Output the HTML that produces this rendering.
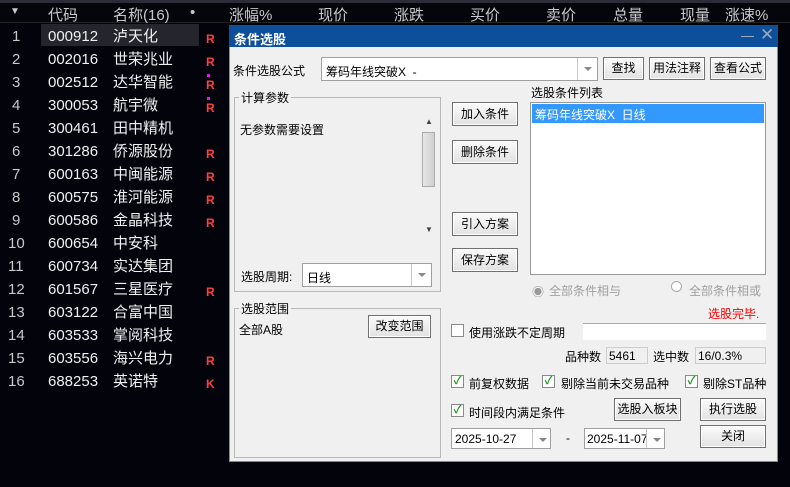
<!DOCTYPE html><html><head><meta charset="utf-8"><style>
*{margin:0;padding:0;box-sizing:border-box}
body{width:790px;height:487px;background:#03030c;font-family:"Liberation Sans","Noto Sans CJK SC",sans-serif;position:relative;overflow:hidden}
.a{position:absolute;white-space:nowrap}
.hd{color:#c8c8c8;font-size:15px;top:4px}
.n{color:#c8c8c8;font-size:15px;margin-top:3px;line-height:18px}
.c{color:#f0f0f0;font-size:15px;margin-top:3px;line-height:18px}
.R{color:#ff4040;font-size:12px;font-weight:bold;margin-top:1px}
.dl{font-size:12px;color:#000;margin-top:1px}
.btn{position:absolute;background:linear-gradient(#fafafa,#e2e2e2);border:1px solid #707070;font-size:12px;text-align:center;color:#000;box-shadow:inset 0 0 0 1px #fff}
.box{position:absolute;background:#fff;border:1px solid #a0a0a0}
.grp{position:absolute;border:1px solid #b8b8b8}
.gl{position:absolute;background:#f0f0f0;font-size:12px;padding:0 2px;top:-9px;left:4px}
.cb{position:absolute;width:13px;height:13px;border:1px solid #8a8a8a;background:#fff;font-size:11px;color:#1a9a1a;line-height:11px;text-align:center;font-weight:bold}
.arr{position:absolute;right:0;top:0;bottom:0;width:20px;border-left:1px solid #c8c8c8}
.arr:after{content:"";position:absolute;left:6px;top:9px;border:4px solid transparent;border-top:4px solid #888}
</style></head><body>
<div class="a" style="left:0;top:0;width:790px;height:3px;background:#2c2c38"></div>
<div class="a" style="left:0;top:3px;width:790px;height:20px;background:#05050c;border-bottom:1px solid #222"></div>
<div class="a hd" style="left:10px;top:6px;font-size:10px">▼</div>
<div class="a hd" style="left:48px">代码</div>
<div class="a hd" style="left:113px">名称(16)</div>
<div class="a hd" style="left:190px">•</div>
<div class="a hd" style="left:229px">涨幅%</div>
<div class="a hd" style="left:318px">现价</div>
<div class="a hd" style="left:394px">涨跌</div>
<div class="a hd" style="left:470px">买价</div>
<div class="a hd" style="left:546px">卖价</div>
<div class="a hd" style="left:613px">总量</div>
<div class="a hd" style="left:680px">现量</div>
<div class="a hd" style="left:725px">涨速%</div>
<div class="a" style="left:41px;top:24px;width:158px;height:22px;background:#25252d"></div>
<div class="a n" style="left:12px;top:25px">1</div><div class="a c" style="left:48px;top:25px">000912</div><div class="a c" style="left:113px;top:25px">泸天化</div><div class="a R" style="left:206px;top:31px">R</div>
<div class="a n" style="left:12px;top:48px">2</div><div class="a c" style="left:48px;top:48px">002016</div><div class="a c" style="left:113px;top:48px">世荣兆业</div><div class="a R" style="left:206px;top:54px">R</div>
<div class="a n" style="left:12px;top:71px">3</div><div class="a c" style="left:48px;top:71px">002512</div><div class="a c" style="left:113px;top:71px">达华智能</div><div class="a R" style="left:206px;top:77px">R</div><div class="a" style="left:207px;top:74px;width:3px;height:3px;background:#f0f"></div>
<div class="a n" style="left:12px;top:94px">4</div><div class="a c" style="left:48px;top:94px">300053</div><div class="a c" style="left:113px;top:94px">航宇微</div><div class="a R" style="left:206px;top:100px">R</div><div class="a" style="left:207px;top:97px;width:3px;height:3px;background:#f0f"></div>
<div class="a n" style="left:12px;top:117px">5</div><div class="a c" style="left:48px;top:117px">300461</div><div class="a c" style="left:113px;top:117px">田中精机</div>
<div class="a n" style="left:12px;top:140px">6</div><div class="a c" style="left:48px;top:140px">301286</div><div class="a c" style="left:113px;top:140px">侨源股份</div><div class="a R" style="left:206px;top:146px">R</div>
<div class="a n" style="left:12px;top:163px">7</div><div class="a c" style="left:48px;top:163px">600163</div><div class="a c" style="left:113px;top:163px">中闽能源</div><div class="a R" style="left:206px;top:169px">R</div>
<div class="a n" style="left:12px;top:186px">8</div><div class="a c" style="left:48px;top:186px">600575</div><div class="a c" style="left:113px;top:186px">淮河能源</div><div class="a R" style="left:206px;top:192px">R</div>
<div class="a n" style="left:12px;top:209px">9</div><div class="a c" style="left:48px;top:209px">600586</div><div class="a c" style="left:113px;top:209px">金晶科技</div><div class="a R" style="left:206px;top:215px">R</div>
<div class="a n" style="left:8px;top:232px">10</div><div class="a c" style="left:48px;top:232px">600654</div><div class="a c" style="left:113px;top:232px">中安科</div>
<div class="a n" style="left:8px;top:255px">11</div><div class="a c" style="left:48px;top:255px">600734</div><div class="a c" style="left:113px;top:255px">实达集团</div>
<div class="a n" style="left:8px;top:278px">12</div><div class="a c" style="left:48px;top:278px">601567</div><div class="a c" style="left:113px;top:278px">三星医疗</div><div class="a R" style="left:206px;top:284px">R</div>
<div class="a n" style="left:8px;top:301px">13</div><div class="a c" style="left:48px;top:301px">603122</div><div class="a c" style="left:113px;top:301px">合富中国</div>
<div class="a n" style="left:8px;top:324px">14</div><div class="a c" style="left:48px;top:324px">603533</div><div class="a c" style="left:113px;top:324px">掌阅科技</div>
<div class="a n" style="left:8px;top:347px">15</div><div class="a c" style="left:48px;top:347px">603556</div><div class="a c" style="left:113px;top:347px">海兴电力</div><div class="a R" style="left:206px;top:353px">R</div>
<div class="a n" style="left:8px;top:370px">16</div><div class="a c" style="left:48px;top:370px">688253</div><div class="a c" style="left:113px;top:370px">英诺特</div><div class="a R" style="left:206px;top:376px">K</div>

<div class="a" style="left:229px;top:25px;width:549px;height:437px;background:#f0f0f0;border:1px solid #888"></div>
<div class="a" style="left:229px;top:25px;width:549px;height:22px;background:#0e4f9c"></div>
<div class="a" style="left:234px;top:29px;color:#fff;font-size:13px;font-weight:bold">条件选股</div>
<div class="a" style="left:741px;top:36px;width:13px;height:1px;background:#9ab"></div>
<div class="a" style="left:760px;top:25px;color:#9ab;font-size:17px;font-weight:200">✕</div>

<div class="a dl" style="left:233px;top:61px">条件选股公式</div>
<div class="box" style="left:321px;top:57px;width:277px;height:24px"><span class="a dl" style="left:4px;top:4px">筹码年线突破X &nbsp;-</span><div class="arr"></div></div>
<div class="btn" style="left:603px;top:57px;width:41px;height:23px;line-height:21px">查找</div>
<div class="btn" style="left:649px;top:57px;width:56px;height:23px;line-height:21px">用法注释</div>
<div class="btn" style="left:710px;top:57px;width:56px;height:23px;line-height:21px">查看公式</div>

<div class="grp" style="left:234px;top:97px;width:207px;height:195px"><span class="gl">计算参数</span></div>
<div class="a dl" style="left:240px;top:120px">无参数需要设置</div>
<div class="a" style="left:421px;top:117px;width:15px;height:119px;background:#f0f0f0"></div>
<div class="a" style="left:422px;top:132px;width:13px;height:55px;background:linear-gradient(90deg,#e6e6e6,#d0d0d0);border:1px solid #aaa"></div>
<div class="a" style="left:425px;top:117px;font-size:8px;color:#444">▲</div>
<div class="a" style="left:425px;top:225px;font-size:8px;color:#444">▼</div>
<div class="a dl" style="left:241px;top:267px">选股周期:</div>
<div class="box" style="left:302px;top:263px;width:130px;height:24px"><span class="a dl" style="left:4px;top:4px">日线</span><div class="arr"></div></div>

<div class="grp" style="left:234px;top:308px;width:207px;height:150px"><span class="gl">选股范围</span></div>
<div class="a dl" style="left:239px;top:320px">全部A股</div>
<div class="btn" style="left:368px;top:315px;width:63px;height:23px;line-height:21px">改变范围</div>

<div class="btn" style="left:452px;top:102px;width:66px;height:24px;line-height:22px">加入条件</div>
<div class="btn" style="left:452px;top:140px;width:66px;height:24px;line-height:22px">删除条件</div>
<div class="btn" style="left:452px;top:212px;width:66px;height:24px;line-height:22px">引入方案</div>
<div class="btn" style="left:452px;top:248px;width:66px;height:24px;line-height:22px">保存方案</div>

<div class="a dl" style="left:531px;top:83px">选股条件列表</div>
<div class="box" style="left:530px;top:102px;width:236px;height:173px;border-color:#999"></div>
<div class="a" style="left:532px;top:104px;width:232px;height:19px;background:#3399ff;color:#fff;font-size:12px;padding:2px 3px">筹码年线突破X &nbsp;日线</div>
<div class="a" style="left:532px;top:283px;font-size:12px;color:#999">◉</div>
<div class="a" style="left:549px;top:282px;font-size:12px;color:#a0a0a0">全部条件相与</div>
<div class="a" style="left:671px;top:281px;width:11px;height:11px;border:1px solid #aaa;border-radius:50%;background:#fff"></div>
<div class="a" style="left:689px;top:282px;font-size:12px;color:#a0a0a0">全部条件相或</div>
<div class="a" style="left:708px;top:305px;font-size:12px;color:#ff0000">选股完毕.</div>

<div class="cb" style="left:451px;top:324px"></div>
<div class="a dl" style="left:469px;top:323px">使用涨跌不定周期</div>
<div class="a" style="left:583px;top:323px;width:183px;height:17px;background:#fff;border-top:1px solid #aaa"></div>
<div class="a dl" style="left:565px;top:347px">品种数</div>
<div class="a" style="left:606px;top:347px;width:42px;height:17px;border:1px solid #ccc;font-size:12px;padding:1px 2px">5461</div>
<div class="a dl" style="left:653px;top:347px">选中数</div>
<div class="a" style="left:695px;top:347px;width:71px;height:17px;border:1px solid #ccc;font-size:12px;padding:1px 2px">16/0.3%</div>

<div class="cb" style="left:451px;top:375px">✓</div><div class="a dl" style="left:469px;top:374px">前复权数据</div>
<div class="cb" style="left:542px;top:375px">✓</div><div class="a dl" style="left:561px;top:374px">剔除当前未交易品种</div>
<div class="cb" style="left:685px;top:375px">✓</div><div class="a dl" style="left:703px;top:374px">剔除ST品种</div>
<div class="cb" style="left:451px;top:404px">✓</div><div class="a dl" style="left:469px;top:403px">时间段内满足条件</div>
<div class="btn" style="left:614px;top:398px;width:67px;height:23px;line-height:21px">选股入板块</div>
<div class="btn" style="left:700px;top:398px;width:66px;height:23px;line-height:21px">执行选股</div>
<div class="box" style="left:451px;top:428px;width:100px;height:21px"><span class="a" style="left:3px;top:3px;font-size:12px">2025-10-27</span><div class="arr" style="width:18px"></div></div>
<div class="a dl" style="left:566px;top:430px">-</div>
<div class="box" style="left:584px;top:428px;width:81px;height:21px;overflow:hidden"><span class="a" style="left:2px;top:3px;font-size:12px">2025-11-07</span><div class="arr" style="width:18px;background:#fff"></div></div>
<div class="btn" style="left:700px;top:425px;width:66px;height:23px;line-height:21px">关闭</div>
</body></html>
